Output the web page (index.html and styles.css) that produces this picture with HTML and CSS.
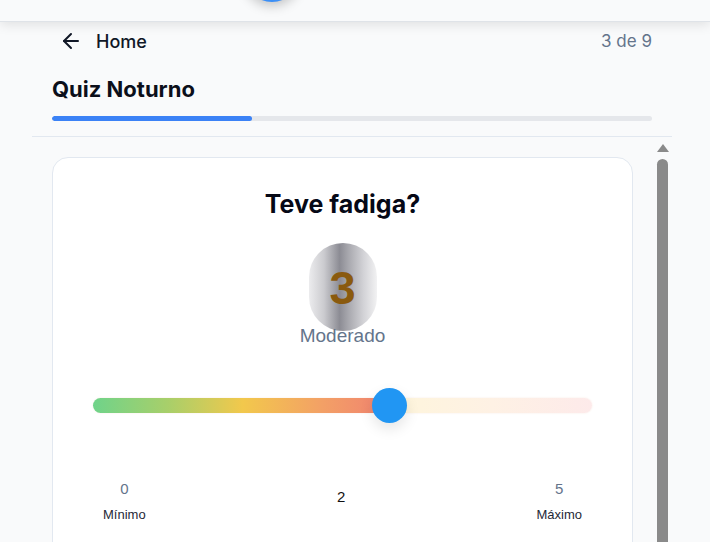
FILE: index.html
```html
<!DOCTYPE html>
<html lang="pt">
<head>
<meta charset="utf-8">
<title>Quiz Noturno</title>
<link rel="stylesheet" href="styles.css">
</head>
<body>
<div class="topbar"><span class="fab"></span></div>
<div class="page">
  <header class="head">
    <div class="nav">
      <button class="back">
        <svg width="24" height="24" viewBox="0 0 24 24" fill="none" stroke="#111827" stroke-width="2" stroke-linecap="round" stroke-linejoin="round"><path d="m12 19-7-7 7-7"/><path d="M19 12H5"/></svg>
        <span>Home</span>
      </button>
      <span class="count">3 de 9</span>
    </div>
    <h1 class="title">Quiz Noturno</h1>
    <div class="progress"><div class="fill" style="width:33.33%"></div></div>
  </header>
  <div class="body">
    <div class="scroll">
      <section class="card">
        <h2 class="question">Teve fadiga?</h2>
        <div class="pill">3</div>
        <div class="level">Moderado</div>
        <div class="slider">
          <div class="track"></div>
          <span class="thumb" style="left:279px"></span>
        </div>
        <div class="labels">
          <div class="end"><span class="num">0</span><span class="cap">Mínimo</span></div>
          <div class="mid">2</div>
          <div class="end"><span class="num">5</span><span class="cap">Máximo</span></div>
        </div>
      </section>
    </div>
    <div class="bar">
      <span class="arrow"></span>
      <span class="knob"></span>
    </div>
  </div>
</div>
</body>
</html>
```

FILE: styles.css
```css
* { box-sizing: border-box; }
html, body { margin: 0; padding: 0; }
body {
  background: #f9fafb;
  font-family: Inter, "Noto Sans", sans-serif;
  color: #111827;
  height: 542px;
  overflow: hidden;
}
.topbar {
  height: 22px;
  background: #f9fafb;
  border-bottom: 1px solid #dfe3e8;
  box-shadow: 0 3px 12px rgba(0,0,0,0.10);
  position: relative;
  z-index: 2;
  overflow: hidden;
}
.fab {
  position: absolute;
  left: 244px;
  top: -54px;
  width: 56px;
  height: 56px;
  border-radius: 50%;
  background: #3b8ff6;
  box-shadow: 0 4px 12px rgba(0,0,0,0.22);
}
.page {
  width: 640px;
  margin-left: 32px;
}
.head {
  padding: 0 20px 15px;
  border-bottom: 1px solid #e2e8f0;
}
.nav {
  height: 38px;
  display: flex;
  align-items: center;
  justify-content: space-between;
}
.back {
  display: flex;
  align-items: center;
  gap: 13px;
  margin-left: 7px;
  padding: 0;
  border: 0;
  background: none;
  font: 500 18px Inter, sans-serif;
  color: #111827;
}
.back svg { width: 24px; height: 24px; display: block; }
.count {
  font-size: 17px;
  color: #64748b;
}
.title {
  margin: 15px 0 0;
  font-size: 22px;
  line-height: 28px;
  font-weight: 700;
  color: #0b0f1a;
}
.progress {
  margin-top: 13px;
  height: 5px;
  border-radius: 3px;
  background: #e5e7eb;
  overflow: hidden;
}
.progress .fill {
  height: 100%;
  background: #3b82f6;
  border-radius: 3px;
}
.body {
  display: flex;
}
.scroll {
  flex: 1;
  padding: 20px 19px 0 20px;
}
.card {
  background: #fff;
  border: 1px solid #e2e8f0;
  border-radius: 16px;
  padding: 30px 40px 40px;
  display: flex;
  flex-direction: column;
  align-items: center;
  height: 420px;
}
.question {
  margin: 0;
  font-size: 25px;
  line-height: 32px;
  font-weight: 700;
  color: #050816;
}
.pill {
  margin-top: 23px;
  width: 68px;
  height: 88px;
  border-radius: 34px;
  background: linear-gradient(90deg, #ececee 0%, #cbcbcf 22%, #8c8c94 45%, #a8a8ae 58%, #d2d2d6 80%, #f2f2f3 100%);
  display: flex;
  align-items: center;
  justify-content: center;
  font-family: "Liberation Sans", Arial, sans-serif;
  font-weight: 700;
  font-size: 47px;
  line-height: 1;
  color: #8a5a0e;
}
.level {
  margin-top: -6px;
  font-family: "Liberation Sans", Arial, sans-serif;
  font-size: 19px;
  line-height: 22px;
  color: #64748b;
}
.slider {
  margin-top: 41px;
  width: 100%;
  height: 34px;
  display: flex;
  align-items: center;
  position: relative;
}
.track {
  width: 100%;
  height: 15px;
  border-radius: 8px;
  background: linear-gradient(90deg, #6fd38a 0%, #a8cf6a 15%, #f2c84c 30%, #f3a066 46%, #f08270 59%, #fef5dc 61%, #fef1e4 80%, #fdeaea 100%);
  box-shadow: 0 0 2px rgba(240,200,180,0.4);
}
.thumb {
  position: absolute;
  top: 0;
  width: 35px;
  height: 35px;
  border-radius: 50%;
  background: #2196f3;
  box-shadow: 0 6px 14px rgba(0,0,0,0.10);
}
.labels {
  margin-top: 58px;
  width: 100%;
  padding: 0 10px;
  display: flex;
  justify-content: space-between;
  align-items: center;
  font-family: "Liberation Sans", Arial, sans-serif;
}
.end {
  display: flex;
  flex-direction: column;
  align-items: center;
  gap: 10px;
}
.num {
  font-size: 15px;
  line-height: 17px;
  color: #64748b;
}
.cap {
  font-size: 13px;
  line-height: 15px;
  color: #1f2937;
}
.mid {
  font-size: 15px;
  color: #111;
  margin-top: -10px;
}
.bar {
  width: 20px;
  display: flex;
  flex-direction: column;
  align-items: center;
  padding-top: 7px;
  padding-left: 1px;
}
.arrow {
  width: 0;
  height: 0;
  border-left: 6px solid transparent;
  border-right: 6px solid transparent;
  border-bottom: 8px solid #8a8a8a;
}
.knob {
  margin-top: 7px;
  width: 11px;
  height: 420px;
  background: #8a8a8a;
  border-radius: 6px 6px 0 0;
}
```
